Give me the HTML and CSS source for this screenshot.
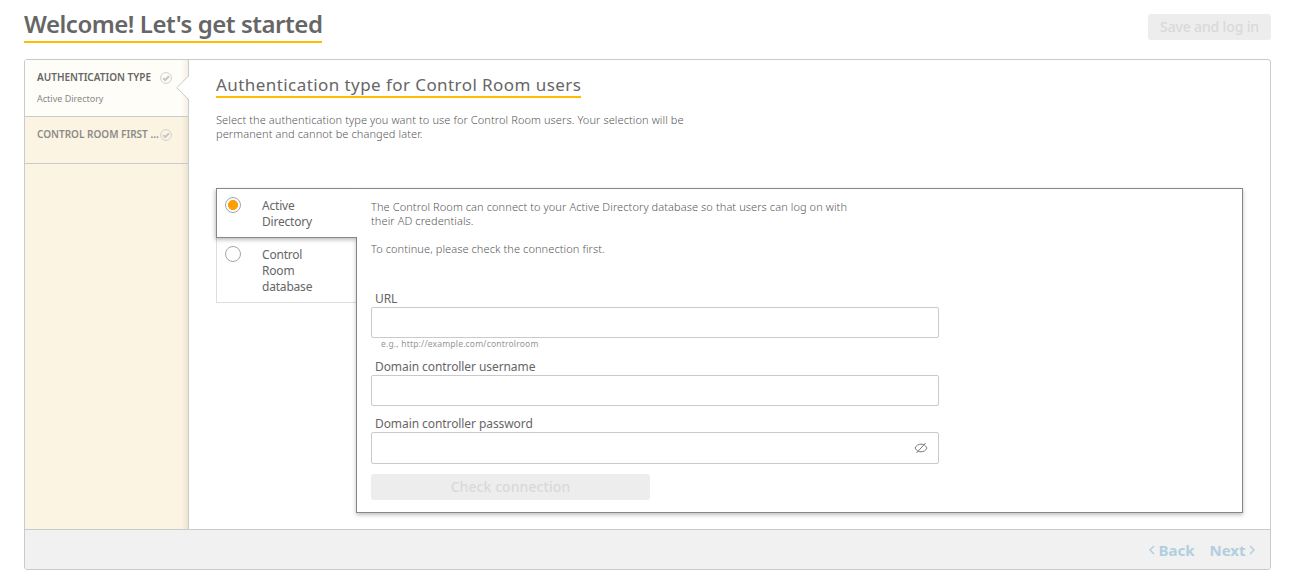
FILE: index.html
```html
<!DOCTYPE html>
<html lang="en">
<head>
<meta charset="utf-8">
<title>Welcome! Let's get started</title>
<link rel="stylesheet" href="styles.css">
</head>
<body>
<header class="page-header">
  <h1 class="page-title">Welcome! Let's get started</h1>
  <button class="button save" disabled>Save and log in</button>
</header>
<main class="wizard">
  <div class="wizard-body">
    <nav class="steps">
      <div class="step step-active">
        <div class="step-head"><span class="step-title">AUTHENTICATION TYPE</span>
          <svg class="check" viewBox="0 0 12 12"><circle cx="6" cy="6" r="5.4" fill="none" stroke="#cfcfcc"/><path d="M3.2 6.1 5.2 8 9 4.3" fill="none" stroke="#c6c6c4" stroke-width="2"/></svg></div>
        <div class="step-sub">Active Directory</div>
        <svg class="notch" viewBox="0 0 13 24"><path d="M13 0 1 11.7 13 23.5Z" fill="#fff"/><path d="M12 0V.5L.8 11.7 12 23V24" fill="none" stroke="#c9cacb"/></svg>
      </div>
      <div class="step">
        <div class="step-head"><span class="step-title">CONTROL ROOM FIRST ...</span>
          <svg class="check" viewBox="0 0 12 12"><circle cx="6" cy="6" r="5.4" fill="none" stroke="#cfcfcc"/><path d="M3.2 6.1 5.2 8 9 4.3" fill="none" stroke="#c6c6c4" stroke-width="2"/></svg></div>
      </div>
    </nav>
    <section class="content">
      <h2 class="section-title">Authentication type for Control Room users</h2>
      <p class="copy intro">Select the authentication type you want to use for Control Room users. Your selection will be<br>permanent and cannot be changed later.</p>
      <div class="auth">
        <div class="choices">
          <label class="choice choice-selected"><span class="radio radio-on"></span><span class="choice-label">Active<br>Directory</span></label>
          <label class="choice"><span class="radio"></span><span class="choice-label">Control<br>Room<br>database</span></label>
        </div>
        <div class="details">
          <p class="copy">The Control Room can connect to your Active Directory database so that users can log on with<br>their AD credentials.</p>
          <p class="copy second">To continue, please check the connection first.</p>
          <label class="field-label" for="url">URL</label>
          <div class="field"><input id="url" type="text"></div>
          <div class="hint">e.g., http://example.com/controlroom</div>
          <label class="field-label" for="user">Domain controller username</label>
          <div class="field"><input id="user" type="text"></div>
          <label class="field-label label-pass" for="pass">Domain controller password</label>
          <div class="field field-pass"><input id="pass" type="password">
            <svg class="eye" viewBox="0 0 14 12"><path d="M1 6C2.500 3.200 4.500 2.200 7 2.200S11.500 3.200 13 6C11.500 8.800 9.500 9.800 7 9.800S2.500 8.800 1 6ZM2.500 11 11.500 1" fill="none" stroke="#777b82"/></svg></div>
          <button class="button test" disabled>Check connection</button>
        </div>
      </div>
    </section>
  </div>
  <footer class="wizard-footer">
    <a class="pager"><svg class="chev" viewBox="0 0 6 10"><path d="M5 1 1 5 5 9" fill="none" stroke="#b3cee0" stroke-width="1.500"/></svg>Back</a>
    <a class="pager">Next<svg class="chev" viewBox="0 0 6 10"><path d="M1 1 5 5 1 9" fill="none" stroke="#b3cee0" stroke-width="1.500"/></svg></a>
  </footer>
</main>
</body>
</html>
```
FILE: styles.css
```css
* { box-sizing: border-box; margin: 0; padding: 0; }
body { height: 576px; overflow: hidden; padding: 0 24px; background: #fff; color: #666; font-family: "Noto Sans", sans-serif; display: flex; flex-direction: column; }
.page-header { height: 59px; display: flex; justify-content: space-between; align-items: flex-start; }
.page-title { margin-top: 7px; height: 36px; width: 298px; line-height: 34px; font-size: 24px; font-weight: 600; letter-spacing: -.47px; border-bottom: 2px solid #ffbc03; white-space: nowrap; }
.button { border: 0; border-radius: 3px; background: #ededed; color: #d9d9d9; font: 500 14px/26px "Noto Sans", sans-serif; height: 26px; white-space: nowrap; }
.save { width: 123px; margin-top: 14px; letter-spacing: -.15px; }
.wizard { width: 1247px; height: 511px; border: 1px solid #c9cacb; border-radius: 3px; display: flex; flex-direction: column; overflow: hidden; }
.wizard-body { height: 469px; display: flex; }
.steps { width: 164px; background: linear-gradient(to left, #ede4d0, #fcf4e2 7px); border-right: 1px solid #c9cacb; }
.step { position: relative; height: 47px; padding: 10px 0 0 12px; border-bottom: 1px solid #c9cacb; color: #8c8b88; }
.step-active { height: 57px; background: linear-gradient(to left, #f3f0e8, #fffdf7 7px); color: #666; }
.step-head { display: flex; width: 135px; height: 15px; justify-content: space-between; align-items: center; }
.step-title { font-size: 10px; font-weight: 600; line-height: 15px; white-space: nowrap; }
.check { width: 12px; height: 12px; flex: none; }
.step-sub { font-size: 9px; line-height: 14px; margin-top: 7px; color: #888; }
.notch { position: absolute; right: -1px; top: 16px; width: 13px; height: 24px; }
.content { padding: 14px 0 0 27px; }
.section-title { width: 365px; height: 24px; line-height: 22px; font-size: 17px; font-weight: 400; letter-spacing: .43px; border-bottom: 2px solid #ffbc03; white-space: nowrap; }
.copy { font-size: 11px; line-height: 14px; letter-spacing: .09px; color: #585858; white-space: nowrap; font-weight: 350; }
.intro { margin-top: 15px; height: 28px; }
.auth { display: flex; margin-top: 47px; width: 1027px; height: 325px; }
.choices { width: 140px; }
.choice { display: flex; height: 65px; padding: 8px 0 0 8px; border: 1px solid #ddd; border-top: 0; border-right: 0; font-size: 12px; line-height: 16px; }
.choice-label { padding-top: 1px; letter-spacing: -.2px; }
.choice-selected { position: relative; z-index: 1; width: 141px; height: 50px; background: #fff; border: 1px solid #858789; border-right: 0; box-shadow: -1px 2px 4px rgba(0,0,0,.25); clip-path: inset(-8px 0 -8px -8px); }
.radio { width: 16px; height: 16px; margin-right: 21px; border: 1px solid #a4a6a8; border-radius: 50%; background: #fff; flex: none; }
.radio-on { background: radial-gradient(circle, #ff9f05 4.700px, #fff 5.300px); }
.details { width: 887px; height: 325px; border: 1px solid #858789; padding: 11px 0 0 14px; box-shadow: 0 2px 4px rgba(0,0,0,.25); display: flex; flex-direction: column; align-items: flex-start; }
.second { margin: 14px 0 34px; }
.field-label { font-size: 12px; line-height: 18px; height: 17px; margin-left: 4px; letter-spacing: -.08px; white-space: nowrap; }
.field { width: 568px; height: 31px; position: relative; }
.field input { display: block; width: 100%; height: 100%; border: 1px solid #c9cacb; border-radius: 2px; background: #fff; }
.hint { height: 12px; line-height: 12px; font-size: 8.500px; letter-spacing: .19px; color: #969696; margin: 0 0 8px 10px; white-space: nowrap; }
.label-pass { margin-top: 9px; }
.field-pass { height: 32px; }
.eye { position: absolute; right: 11px; top: 10px; width: 14px; height: 12px; }
.test { width: 279px; margin-top: 10px; letter-spacing: .08px; }
.wizard-footer { height: 40px; background: #f1f1f1; border-top: 1px solid #c9cacb; display: flex; justify-content: flex-end; gap: 15px; padding: 2px 15px 0 0; }
.pager { display: flex; align-items: center; gap: 3.500px; height: 36px; font-size: 15px; font-weight: 700; color: #b3cee0; }
.chev { width: 6px; height: 10px; }
```
